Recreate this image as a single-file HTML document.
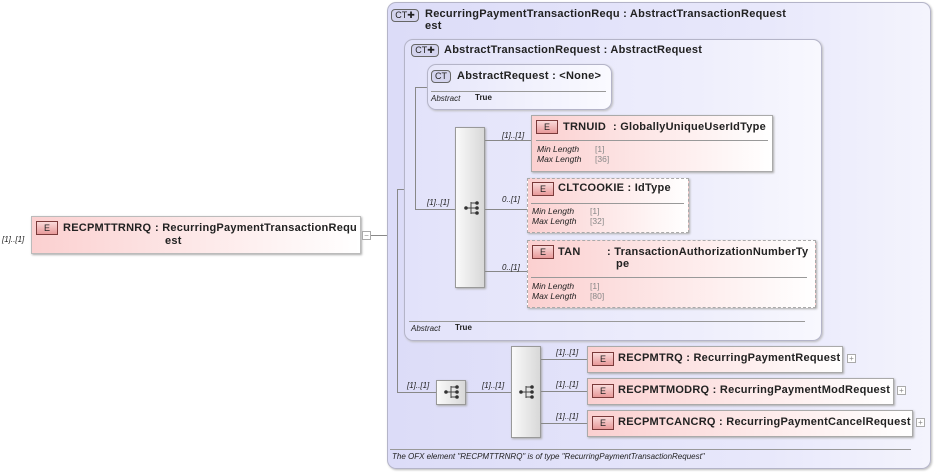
<!DOCTYPE html>
<html><head><meta charset="utf-8"><style>
*{margin:0;padding:0;box-sizing:border-box}
body{width:934px;height:472px;background:#fff;position:relative;overflow:hidden;font-family:"Liberation Sans",sans-serif;color:#222}
.a{position:absolute}
.ct{position:absolute;border:1px solid #b4b4c8;border-radius:9px;background:linear-gradient(90deg,#dcdcf8,#e8e8fb 70%,#f4f4fd);box-shadow:1px 1px 2px #bbb}
.t{position:absolute;font-size:11px;font-weight:bold;white-space:nowrap;line-height:12px;letter-spacing:0.25px}
.badge{position:absolute;border:1px solid #666;border-radius:4px;background:#d4d4ee;font-size:9px;text-align:center;line-height:11px;height:13px}
.el{position:absolute;border:1px solid #aaa;background:linear-gradient(90deg,#fbd0d0,#fde8e8 50%,#fff);box-shadow:1px 1px 2px #aaa}
.dash{border:1px dashed #aaa}
.eb{position:absolute;width:22px;height:14px;border:1px solid #7a3a3a;background:linear-gradient(#fadada,#e89a9a);font-size:9px;text-align:center;line-height:12px}
.hl{position:absolute;height:1px;background:#888}
.vl{position:absolute;width:1px;background:#888}
.m{position:absolute;font-size:8px;font-style:italic;white-space:nowrap}
.f{position:absolute;font-size:8.5px;font-style:italic;line-height:10px}
.fv{position:absolute;font-size:8.5px;color:#888;line-height:10px}
.seq{position:absolute;border:1px solid #999;background:linear-gradient(90deg,#fafafa,#d8d8d8);box-shadow:1px 1px 2px #aaa}
.ic{position:absolute;width:18px;height:16px}
.pl{position:absolute;width:9px;height:9px;border:1px solid #aaa;background:#fff;font-size:8px;line-height:7px;text-align:center;color:#888}
</style></head><body>
<svg width="0" height="0" style="position:absolute"><defs><g id="sq"><line x1="1" y1="8" x2="7" y2="8" stroke="#444"/><line x1="7" y1="2" x2="7" y2="14" stroke="#444"/><line x1="7" y1="3" x2="12" y2="3" stroke="#444"/><line x1="7" y1="8" x2="12" y2="8" stroke="#444"/><line x1="7" y1="13" x2="12" y2="13" stroke="#444"/><circle cx="2" cy="8" r="1.8" fill="#333"/><circle cx="13" cy="3" r="1.8" fill="#333"/><circle cx="13" cy="8" r="1.8" fill="#333"/><circle cx="13" cy="13" r="1.8" fill="#333"/></g></defs></svg>

<div class="m" style="left:2px;top:235px">[1]..[1]</div>
<div class="el" style="left:31px;top:216px;width:330px;height:38px;border-color:#bbb"></div>
<div class="eb" style="left:36px;top:221px">E</div>
<div class="t" style="left:63px;top:222px">RECPMTTRNRQ</div>
<div class="t" style="left:155px;top:222px">: RecurringPaymentTransactionRequ</div>
<div class="t" style="left:165px;top:235px">est</div>
<div class="pl" style="left:362px;top:231px">−</div>
<div class="hl" style="left:371px;top:235px;width:26px"></div>

<div class="ct" style="left:387px;top:2px;width:544px;height:467px"></div>
<div class="badge" style="left:391px;top:9px;width:28px">CT✚</div>
<div class="t" style="left:425px;top:8px">RecurringPaymentTransactionRequ : AbstractTransactionRequest</div>
<div class="t" style="left:425px;top:20px">est</div>
<div class="hl" style="left:390px;top:449px;width:521px;background:#999"></div>
<div class="m" style="left:392px;top:452px;font-size:8px">The OFX element "RECPMTTRNRQ" is of type "RecurringPaymentTransactionRequest"</div>

<div class="vl" style="left:397px;top:189px;height:204px"></div>
<div class="hl" style="left:397px;top:189px;width:8px"></div>
<div class="hl" style="left:397px;top:392px;width:39px"></div>
<div class="m" style="left:407px;top:381px">[1]..[1]</div>

<div class="ct" style="left:404px;top:39px;width:418px;height:302px;background:linear-gradient(90deg,#e2e2fa,#eeeefc 70%,#f8f8fe)"></div>
<div class="badge" style="left:411px;top:44px;width:28px">CT✚</div>
<div class="t" style="left:444px;top:44px">AbstractTransactionRequest : AbstractRequest</div>
<div class="hl" style="left:409px;top:321px;width:396px;background:#999"></div>
<div class="m" style="left:411px;top:324px">Abstract</div>
<div class="a" style="left:455px;top:323px;font-size:8px;font-weight:bold">True</div>

<div class="vl" style="left:415px;top:87px;height:123px"></div>
<div class="hl" style="left:415px;top:87px;width:12px"></div>
<div class="hl" style="left:415px;top:209px;width:40px"></div>
<div class="m" style="left:427px;top:198px">[1]..[1]</div>

<div class="ct" style="left:427px;top:64px;width:185px;height:46px;background:linear-gradient(90deg,#e6e6fa,#fafaff)"></div>
<div class="badge" style="left:431px;top:70px;width:20px;background:#d4d4ee">CT</div>
<div class="t" style="left:457px;top:70px">AbstractRequest : &lt;None&gt;</div>
<div class="hl" style="left:431px;top:91px;width:175px;background:#999"></div>
<div class="m" style="left:431px;top:94px">Abstract</div>
<div class="a" style="left:475px;top:93px;font-size:8px;font-weight:bold">True</div>

<div class="seq" style="left:455px;top:127px;width:30px;height:161px"></div>
<svg class="ic" style="left:463px;top:200px" viewBox="0 0 16 16"><use href="#sq"/></svg>
<div class="hl" style="left:485px;top:140px;width:46px"></div>
<div class="hl" style="left:485px;top:209px;width:42px"></div>
<div class="hl" style="left:485px;top:271px;width:42px"></div>
<div class="m" style="left:502px;top:131px">[1]..[1]</div>
<div class="m" style="left:502px;top:195px">0..[1]</div>
<div class="m" style="left:502px;top:263px">0..[1]</div>

<div class="el" style="left:531px;top:115px;width:242px;height:57px"></div>
<div class="eb" style="left:536px;top:120px">E</div>
<div class="t" style="left:563px;top:121px">TRNUID</div>
<div class="t" style="left:613px;top:121px">: GloballyUniqueUserIdType</div>
<div class="hl" style="left:536px;top:140px;width:232px;background:#999"></div>
<div class="f" style="left:537px;top:144px">Min Length<br>Max Length</div>
<div class="fv" style="left:595px;top:144px">[1]<br>[36]</div>

<div class="el dash" style="left:527px;top:178px;width:162px;height:55px"></div>
<div class="eb" style="left:532px;top:182px">E</div>
<div class="t" style="left:558px;top:182px">CLTCOOKIE : IdType</div>
<div class="hl" style="left:531px;top:203px;width:153px;background:#999"></div>
<div class="f" style="left:532px;top:206px">Min Length<br>Max Length</div>
<div class="fv" style="left:590px;top:206px">[1]<br>[32]</div>

<div class="el dash" style="left:527px;top:240px;width:289px;height:68px"></div>
<div class="eb" style="left:532px;top:245px">E</div>
<div class="t" style="left:558px;top:246px">TAN</div>
<div class="t" style="left:607px;top:246px">: TransactionAuthorizationNumberTy</div>
<div class="t" style="left:616px;top:258px">pe</div>
<div class="hl" style="left:531px;top:277px;width:276px;background:#999"></div>
<div class="f" style="left:532px;top:281px">Min Length<br>Max Length</div>
<div class="fv" style="left:590px;top:281px">[1]<br>[80]</div>

<div class="seq" style="left:436px;top:380px;width:30px;height:25px"></div>
<svg class="ic" style="left:443px;top:384px" viewBox="0 0 16 16"><use href="#sq"/></svg>
<div class="hl" style="left:466px;top:392px;width:45px"></div>
<div class="m" style="left:482px;top:381px">[1]..[1]</div>
<div class="seq" style="left:511px;top:346px;width:30px;height:92px"></div>
<svg class="ic" style="left:518px;top:384px" viewBox="0 0 16 16"><use href="#sq"/></svg>
<div class="hl" style="left:541px;top:359px;width:46px"></div>
<div class="hl" style="left:541px;top:391px;width:46px"></div>
<div class="hl" style="left:541px;top:423px;width:46px"></div>
<div class="m" style="left:556px;top:348px">[1]..[1]</div>
<div class="m" style="left:556px;top:380px">[1]..[1]</div>
<div class="m" style="left:556px;top:412px">[1]..[1]</div>

<div class="el" style="left:587px;top:346px;width:256px;height:27px"></div>
<div class="eb" style="left:592px;top:352px">E</div>
<div class="t" style="left:618px;top:352px">RECPMTRQ : RecurringPaymentRequest</div>
<div class="pl" style="left:847px;top:354px">+</div>

<div class="el" style="left:587px;top:378px;width:307px;height:27px"></div>
<div class="eb" style="left:592px;top:384px">E</div>
<div class="t" style="left:618px;top:384px">RECPMTMODRQ : RecurringPaymentModRequest</div>
<div class="pl" style="left:897px;top:386px">+</div>

<div class="el" style="left:587px;top:410px;width:326px;height:27px"></div>
<div class="eb" style="left:592px;top:416px">E</div>
<div class="t" style="left:618px;top:416px">RECPMTCANCRQ : RecurringPaymentCancelRequest</div>
<div class="pl" style="left:916px;top:418px">+</div>
</body></html>
